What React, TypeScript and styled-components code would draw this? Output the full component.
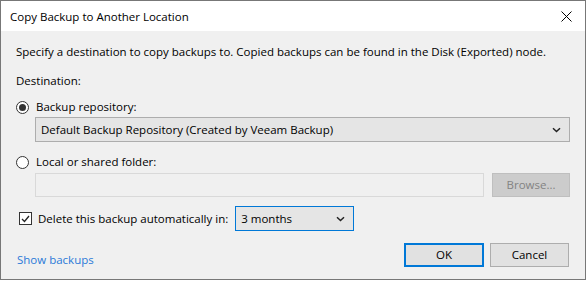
import React from "react";
import styled, { createGlobalStyle, css } from "styled-components";

const Global = createGlobalStyle`
  html, body { margin: 0; padding: 0; background: #ffffff; }
  body { font-family: "Open Sans", "Noto Sans", sans-serif; font-size: 11.5px; color: #000; }
  * { box-sizing: border-box; }
`;

const Window = styled.div`
  width: 586px;
  height: 280px;
  border: 1px solid #777777;
  background: #f0f0f0;
  display: flex;
  flex-direction: column;
`;

const TitleBar = styled.div`
  height: 30px;
  background: #ffffff;
  display: flex;
  align-items: center;
  justify-content: space-between;
  padding: 0 9px 0 9px;
`;

const CloseButton = styled.div`
  width: 12px;
  height: 12px;
  display: flex;
  align-items: center;
  justify-content: center;
  margin-right: 4px;
`;

const Body = styled.div`
  flex: 1;
  display: flex;
  flex-direction: column;
  padding: 13px 15px 0 15px;
  line-height: 16px;
`;

const Text = styled.div<{ $mt?: number }>`
  margin-top: ${(p) => p.$mt ?? 0}px;
  white-space: nowrap;
`;

const OptionRow = styled.label<{ $mt: number }>`
  display: flex;
  align-items: center;
  gap: 7px;
  margin-top: ${(p) => p.$mt}px;
  height: 16px;
`;

const Radio = styled.span<{ $checked?: boolean }>`
  width: 13px;
  height: 13px;
  border-radius: 50%;
  border: 1px solid #333333;
  background: #ffffff;
  display: flex;
  align-items: center;
  justify-content: center;
  &::after {
    content: "";
    width: 7px;
    height: 7px;
    border-radius: 50%;
    background: ${(p) => (p.$checked ? "#333333" : "transparent")};
  }
`;

const Indented = styled.div<{ $mt: number }>`
  margin-left: 19px;
  margin-top: ${(p) => p.$mt}px;
  display: flex;
  gap: 8px;
`;

const Combo = styled.div<{ $focused?: boolean; $width?: number }>`
  height: 25px;
  ${(p) => (p.$width ? css`width: ${p.$width}px;` : css`flex: 1;`)}
  background: #e5e5e5;
  border: 1px solid ${(p) => (p.$focused ? "#0078d7" : "#adadad")};
  display: flex;
  align-items: center;
  justify-content: space-between;
  padding: 0 8px 0 5px;
  white-space: nowrap;
`;

const Input = styled.div`
  flex: 1;
  height: 24px;
  background: #f0f0f0;
  border: 1px solid #d9d9d9;
`;

const Button = styled.div<{ $primary?: boolean; $disabled?: boolean; $width: number }>`
  width: ${(p) => p.$width}px;
  height: 24px;
  display: flex;
  align-items: center;
  justify-content: center;
  background: ${(p) => (p.$disabled ? "#cccccc" : "#e1e1e1")};
  border: ${(p) =>
    p.$primary ? "2px solid #0078d7" : p.$disabled ? "1px solid #bfbfbf" : "1px solid #adadad"};
  color: ${(p) => (p.$disabled ? "#838383" : "#000000")};
`;

const CheckRow = styled.div`
  display: flex;
  align-items: center;
  margin-top: 9px;
  padding-left: 3px;
`;

const CheckBox = styled.span`
  width: 13px;
  height: 13px;
  border: 1px solid #333333;
  background: #ffffff;
  display: flex;
  align-items: center;
  justify-content: center;
  margin-right: 6px;
`;

const CheckLabel = styled.span`
  margin-right: 7px;
`;

const Footer = styled.div`
  display: flex;
  align-items: flex-end;
  justify-content: space-between;
  margin-top: 12px;
`;

const Link = styled.a`
  color: #2a7ad8;
  text-decoration: none;
  margin-left: 1px;
  margin-bottom: -1px;
`;

const ButtonGroup = styled.div`
  display: flex;
  gap: 6px;
  margin-right: 1px;
`;

const Chevron = () => (
  <svg width="9" height="6" viewBox="0 0 9 6">
    <path d="M1 1.2 L4.5 4.5 L8 1.2" fill="none" stroke="#222" strokeWidth="1.5" />
  </svg>
);

export default function App() {
  return (
    <>
      <Global />
      <Window>
        <TitleBar>
          <span>Copy Backup to Another Location</span>
          <CloseButton>
            <svg width="11" height="11" viewBox="0 0 11 11">
              <path d="M0.5 0.5 L10.5 10.5 M10.5 0.5 L0.5 10.5" stroke="#000" strokeWidth="1" />
            </svg>
          </CloseButton>
        </TitleBar>
        <Body>
          <Text>
            Specify a destination to copy backups to. Copied backups can be found in the Disk (Exported) node.
          </Text>
          <Text $mt={13}>Destination:</Text>
          <OptionRow $mt={10}>
            <Radio $checked />
            <span>Backup repository:</span>
          </OptionRow>
          <Indented $mt={2}>
            <Combo>
              <span>Default Backup Repository (Created by Veeam Backup)</span>
              <Chevron />
            </Combo>
          </Indented>
          <OptionRow $mt={12}>
            <Radio />
            <span>Local or shared folder:</span>
          </OptionRow>
          <Indented $mt={3}>
            <Input />
            <Button $disabled $width={78}>Browse...</Button>
          </Indented>
          <CheckRow>
            <CheckBox>
              <svg width="9" height="8" viewBox="0 0 9 8">
                <path d="M1 4 L3.5 6.5 L8 1" fill="none" stroke="#222" strokeWidth="1.3" />
              </svg>
            </CheckBox>
            <CheckLabel>Delete this backup automatically in:</CheckLabel>
            <Combo $focused $width={119}>
              <span>3 months</span>
              <Chevron />
            </Combo>
          </CheckRow>
          <Footer>
            <Link href="#">Show backups</Link>
            <ButtonGroup>
              <Button $primary $width={80}>OK</Button>
              <Button $width={79}>Cancel</Button>
            </ButtonGroup>
          </Footer>
        </Body>
      </Window>
    </>
  );
}
